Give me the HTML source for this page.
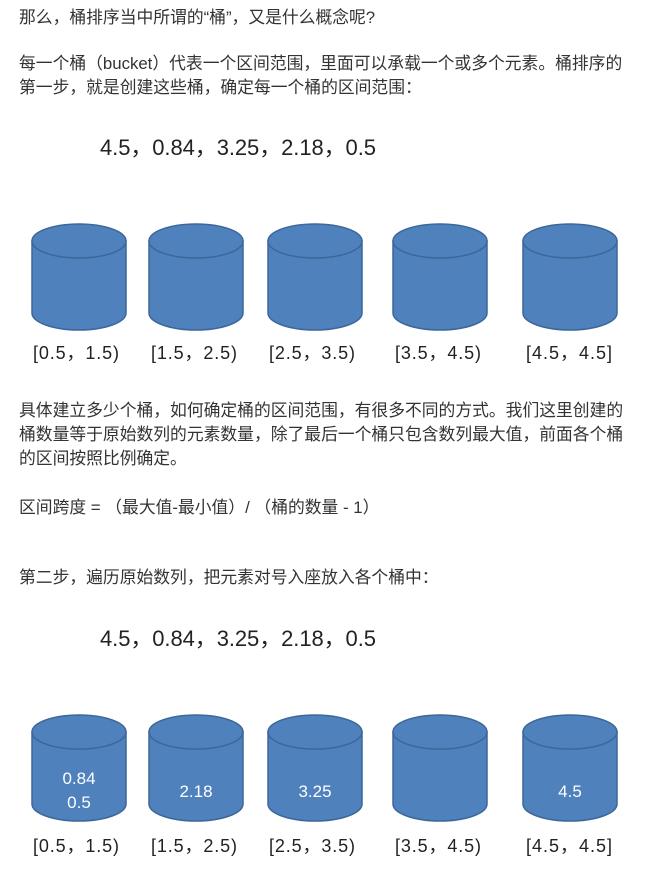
<!DOCTYPE html>
<html><head><meta charset="utf-8"><style>
body{margin:0;background:#fff;width:650px;height:876px;position:relative;overflow:hidden;font-family:"Liberation Sans","Noto Sans CJK SC",sans-serif;color:#333;}
.t{position:absolute;left:19px;font-size:16.8px;line-height:24px;white-space:nowrap;}
svg{position:absolute;left:0;top:0;}
</style></head><body>
<div class="t" style="top:6px">那么，桶排序当中所谓的“桶”，又是什么概念呢?</div>
<div class="t" style="top:52px">每一个桶（bucket）代表一个区间范围，里面可以承载一个或多个元素。桶排序的<br>第一步，就是创建这些桶，确定每一个桶的区间范围：</div>
<div class="t" style="top:399px">具体建立多少个桶，如何确定桶的区间范围，有很多不同的方式。我们这里创建的<br>桶数量等于原始数列的元素数量，除了最后一个桶只包含数列最大值，前面各个桶<br>的区间按照比例确定。</div>
<div class="t" style="top:496px">区间跨度 = （最大值-最小值）/ （桶的数量 - 1）</div>
<div class="t" style="top:566px">第二步，遍历原始数列，把元素对号入座放入各个桶中：</div>
<svg width="650" height="876" font-family="Liberation Sans, Noto Sans CJK SC, sans-serif">
<defs>
<g id="c">
<path d="M-47,17 L-47,89 A47,17 0 0 0 47,89 L47,17 Z" fill="#4f81bd" stroke="#3b679a" stroke-width="1.5"/>
<ellipse cx="0" cy="17" rx="47" ry="17" fill="#4f81bd" stroke="#3b679a" stroke-width="1.5"/>
</g>
</defs>
<g font-size="22" fill="#222"><text x="100" y="155" textLength="276">4.5，0.84，3.25，2.18，0.5</text>
<text x="100" y="646" textLength="276">4.5，0.84，3.25，2.18，0.5</text></g>
<g>
<use href="#c" x="79" y="224"/><use href="#c" x="196" y="224"/><use href="#c" x="315" y="224"/><use href="#c" x="440" y="224"/><use href="#c" x="570" y="224"/>
<use href="#c" x="79" y="715"/><use href="#c" x="196" y="715"/><use href="#c" x="315" y="715"/><use href="#c" x="440" y="715"/><use href="#c" x="570" y="715"/>
</g>
<g font-size="18" fill="#222">
<text x="33" y="359" textLength="86">[0.5，1.5)</text><text x="151" y="359" textLength="86">[1.5，2.5)</text><text x="269" y="359" textLength="86">[2.5，3.5)</text><text x="395" y="359" textLength="86">[3.5，4.5)</text><text x="526" y="359" textLength="86">[4.5，4.5]</text>
<text x="33" y="852" textLength="86">[0.5，1.5)</text><text x="151" y="852" textLength="86">[1.5，2.5)</text><text x="269" y="852" textLength="86">[2.5，3.5)</text><text x="395" y="852" textLength="86">[3.5，4.5)</text><text x="526" y="852" textLength="86">[4.5，4.5]</text>
</g>
<g font-size="17" fill="#fff" text-anchor="middle">
<text x="79" y="784">0.84</text><text x="79" y="808">0.5</text>
<text x="196" y="797">2.18</text><text x="315" y="797">3.25</text><text x="570" y="797">4.5</text>
</g>
</svg>
</body></html>
